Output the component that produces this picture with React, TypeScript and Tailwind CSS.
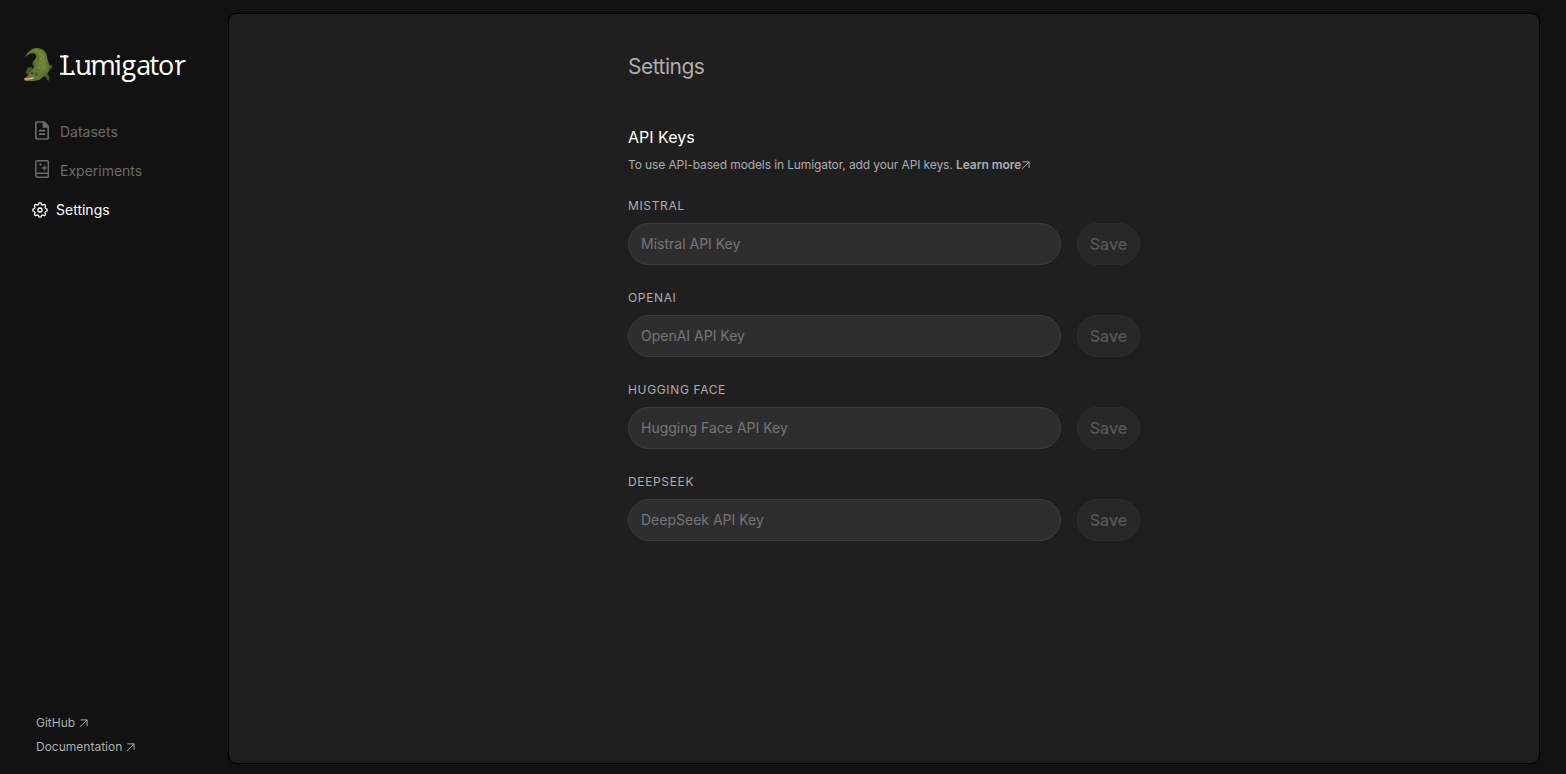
import React from "react";

const providers = [
  { label: "MISTRAL", hint: "Mistral API Key" },
  { label: "OPENAI", hint: "OpenAI API Key" },
  { label: "HUGGING FACE", hint: "Hugging Face API Key" },
  { label: "DEEPSEEK", hint: "DeepSeek API Key" },
];

function Crocodile() {
  return (
    <svg width="32" height="36" viewBox="0 0 32 36" className="shrink-0">
      <path d="M13 13l-2.5 1.5 0 4 3 1zM9 19.500l-3.500 1.500-2 5 3 2 5-4zM25 19l4.500-1.500 1 3.500-2 .8-3 3zM21 25l5 2 1.500 3.500-.3 3-2-.3-1-3-4-1z" fill="#46592a" />
      <path d="M3 10.500C5 5.500 9 1 15 1c5.500 0 9.500 3.500 10 8.500.5 4 2.500 7 2.700 11 .1 4-3 6.500-6 8.500-2 2.500-4 4-7 4.500-3.500 1-8 1-12 .3-1-1.300-.5-2.800 1-3.300 2-1 2.500-3.500 4.500-5 1-2.500 3.500-4 4-6.500.3-3-1-5 1-7 1.500-2 1.500-4-.5-5.200-3-1.500-6.500.5-9.700 3.700z" fill="#5f7533" />
      <path d="M9 4c4-2.500 10.500-2.500 12.500 1.500 2.500 5 2.500 10 3 15-1 3-3 4-6.500 4-2-3-1-7-.5-11 .8-5-1.500-8.500-5-9-1.500-.2-2 0-3.500-.5z" fill="#6c803a" />
      <path d="M18 6.500l1.500 1.500M21 9l1 1.700M18.500 11l1 1.700M21.500 14l1 1.700M17.500 15.500l1 1.700M21 19l1 1.700M16.500 20l1 1.700M13 2.500l1 1" stroke="#93984a" strokeWidth="1.1" />
      <path d="M2.500 31.500c3 .2 6-1 10-1.700l-1 2.200c-3 1-5 1.700-8.500 1.500z" fill="#d25b3c" />
      <path d="M2.500 31.700l2.500.4 1.200-.5 1.200.4 1.100-.8 1.500.3 1.700-1" fill="none" stroke="#f0e5c8" strokeWidth=".9" />
      <circle cx="10" cy="26.300" r="1" fill="#283319" />
      <circle cx="14.500" cy="27.200" r="1" fill="#283319" />
    </svg>
  );
}

function Wordmark() {
  return (
    <svg width="128" height="36" viewBox="0 0 128 36" className="overflow-visible" fill="white">
      <text
        x="3.2 17.2 32.8 57 63.400 78.2 91.500 100.100 116.9"
        y="27.7"
        fontSize="27"
        fontFamily="'Open Sans', sans-serif"
        fontWeight="500"
      >
        Lumigator
      </text>
      <path d="M2 8.400h8.500v2H2zM2 25.700h4v2H2zM13.700 23.500h2v4.200h-2zM17.800 13.200h2v2h-2zM27 13.200h3v2h-3zM30.500 25.700h2.500v2h-2.500zM33.400 13.200h3v2h-3zM57.200 13.200h3v2h-3zM117 13.200h3.500v2H117z" />
    </svg>
  );
}

function DatasetIcon() {
  return (
    <svg width="14" height="19" viewBox="0 0 14 19" fill="none" stroke="currentColor" strokeWidth="1.7">
      <path d="M9 1H2.200Q.8 1 .8 2.500v14Q.8 18 2.200 18h9.600q1.400 0 1.400-1.500V5.300z" strokeLinejoin="round" />
      <path d="M8.500 1v5h4.700z" fill="currentColor" />
      <path d="M4 9.700h6M4 13.200h6" />
    </svg>
  );
}

function ExperimentIcon() {
  return (
    <svg width="14" height="18" viewBox="0 0 14 18" fill="none" stroke="currentColor" strokeWidth="1.5">
      <path d="M13.300.8H2.500Q.8.8.8 2.500v13q0 1.700 1.700 1.700h10.800M13.300.8v12.400H2.800Q.8 13.200.8 15M13.300 13.200v4" />
      <path d="M9.300 5.300l.7 2 2 .7-2 .7-.7 2-.7-2-2-.7 2-.7zM5.400 3l.4 1.100 1.100.4-1.100.4L5.400 6 5 4.900l-1.100-.4L5 4.100z" fill="currentColor" stroke="currentColor" strokeWidth=".4" />
    </svg>
  );
}

const gearOutline = Array.from({ length: 96 }, (_, i) => {
  const a = (i / 96) * Math.PI * 2;
  const r = 6.4 + 0.85 * Math.tanh(1.8 * Math.cos(8 * a));
  return `${(8 + r * Math.sin(a)).toFixed(2)},${(8 - r * Math.cos(a)).toFixed(2)}`;
}).join(" ");

function GearIcon() {
  return (
    <svg width="16" height="16" viewBox="0 0 16 16" fill="none" stroke="currentColor" strokeWidth="1.3" strokeLinejoin="round">
      <polygon points={gearOutline} />
      <circle cx="8" cy="8" r="2" />
    </svg>
  );
}

function Arrow() {
  return (
    <svg width="9" height="9" viewBox="0 0 9 9" fill="none" stroke="currentColor" className="shrink-0">
      <path d="M1.500 .9h6.600v6M8.100 .9L.8 8" />
    </svg>
  );
}

export default function App() {
  return (
    <div className="flex h-[774px] w-full bg-[#121212] font-['Inter',sans-serif] text-sm text-[#adadad]">
      <aside className="flex w-[228px] shrink-0 flex-col pt-[47px] pb-[15px]">
        <div className="flex h-9 items-center gap-1 pl-[22px]">
          <Crocodile />
          <Wordmark />
        </div>
        <nav className="mt-[29px] flex flex-col text-[#6b6b6b]">
          <a className="flex h-[39px] items-center gap-[11px] pl-[35px]">
            <span className="-mt-[3px]"><DatasetIcon /></span>
            <span>Datasets</span>
          </a>
          <a className="flex h-[39px] items-center gap-[11px] pl-[35px]">
            <span className="-mt-[3px]"><ExperimentIcon /></span>
            <span>Experiments</span>
          </a>
          <a className="flex h-[39px] items-center gap-2 pl-8 text-white">
            <GearIcon />
            <span>Settings</span>
          </a>
        </nav>
        <div className="mt-auto flex flex-col pl-9 text-xs leading-6">
          <a className="flex items-center gap-1">GitHub <Arrow /></a>
          <a className="flex items-center gap-1">Documentation <Arrow /></a>
        </div>
      </aside>
      <main className="mt-[13px] mr-[26px] mb-[10px] flex flex-1 justify-center rounded-[8px] border border-black bg-[#1f1f1f]">
        <div className="w-[512px] pt-[38px]">
          <h1 className="text-[21px] leading-[30px] tracking-[-0.5px]">Settings</h1>
          <h2 className="mt-[43px] text-base leading-6 text-white">API Keys</h2>
          <p className="mt-[7px] flex items-center text-xs leading-[18px] tracking-[-0.11px]">
            To use API-based models in Lumigator, add your API keys.&nbsp;
            <b className="font-semibold tracking-[-0.05px]">Learn more</b><Arrow />
          </p>
          <div className="mt-[23px] flex flex-col gap-[24px]">
            {providers.map((provider) => (
              <label key={provider.label} className="flex flex-col">
                <span className="text-xs leading-[18px] tracking-[0.65px]">{provider.label}</span>
                <span className="mt-[8px] flex gap-4">
                  <input
                    placeholder={provider.hint}
                    className="h-[42px] w-[433px] rounded-full border border-[#3d3d3d] bg-[#2e2e2e] px-3 pb-[2px] text-sm placeholder:text-[#767676] outline-none"
                  />
                  <button disabled className="h-[42px] w-[63px] rounded-full border border-[#2f2f2f] bg-[#272727] text-base font-medium text-[#575757]">
                    Save
                  </button>
                </span>
              </label>
            ))}
          </div>
        </div>
      </main>
    </div>
  );
}
